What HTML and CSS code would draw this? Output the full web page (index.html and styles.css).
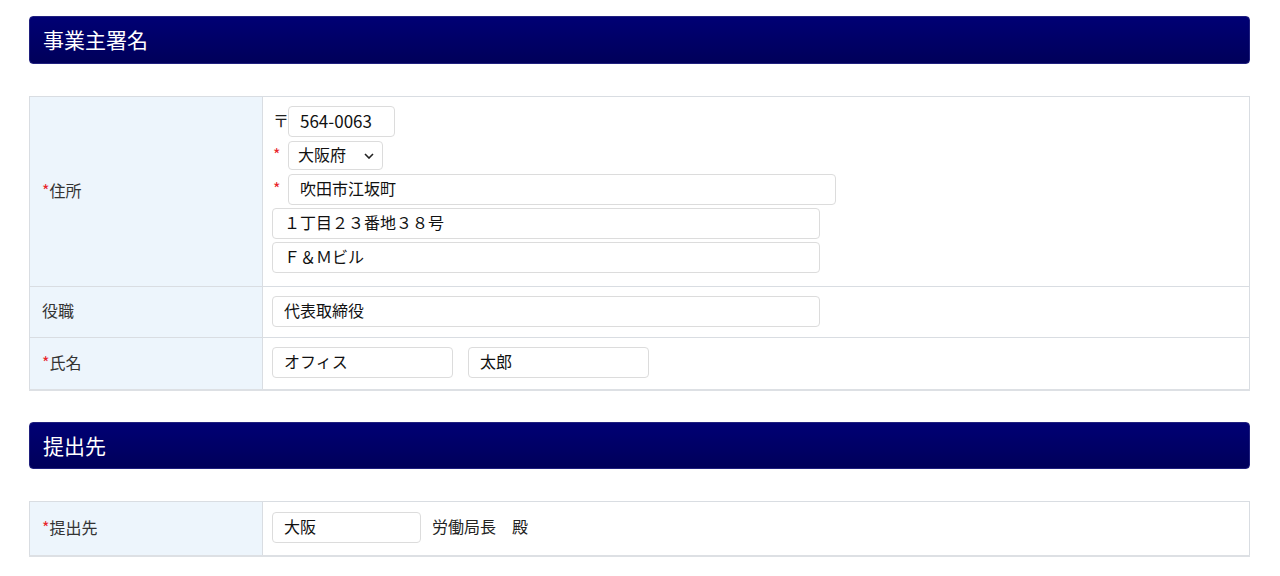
FILE: index.html
```html
<!DOCTYPE html>
<html lang="ja">
<head>
<meta charset="utf-8">
<title>事業主署名</title>
<link rel="stylesheet" href="styles.css">
</head>
<body>
<div class="page">
  <h2 class="section-title">事業主署名</h2>
  <table class="form-table">
    <tr class="row-address">
      <th><span class="req">*</span>住所</th>
      <td>
        <div class="line"><span class="prefix">〒</span><input class="field w-zip zip" type="text" value="564-0063"></div>
        <div class="line"><span class="prefix req">*</span><span class="select-wrap"><select class="field w-pref"><option>大阪府</option></select><svg class="chev" width="10" height="6" viewBox="0 0 10 6"><path d="M1 1 L5 5 L9 1" fill="none" stroke="#222" stroke-width="1.6"/></svg></span></div>
        <div class="line"><span class="prefix req">*</span><input class="field w-long" type="text" value="吹田市江坂町"></div>
        <div class="line"><input class="field w-long" type="text" value="１丁目２３番地３８号"></div>
        <div class="line"><input class="field w-long" type="text" value="Ｆ＆Ｍビル"></div>
      </td>
    </tr>
    <tr class="row-single">
      <th>役職</th>
      <td><input class="field w-long" type="text" value="代表取締役"></td>
    </tr>
    <tr class="row-single row-last">
      <th><span class="req">*</span>氏名</th>
      <td><div class="names"><input class="field w-name" type="text" value="オフィス"><input class="field w-name" type="text" value="太郎"></div></td>
    </tr>
  </table>

  <h2 class="section-title section-title-2">提出先</h2>
  <table class="form-table">
    <tr class="row-single row-office">
      <th><span class="req">*</span>提出先</th>
      <td><div class="office"><input class="field w-office" type="text" value="大阪"><span class="suffix">労働局長　殿</span></div></td>
    </tr>
  </table>
</div>
</body>
</html>
```

FILE: styles.css
```css
* { box-sizing: border-box; }
html, body { margin: 0; padding: 0; background: #fff; }
body {
  font-family: "Noto Sans CJK JP", "Noto Sans", sans-serif;
  color: #333;
}
.page {
  padding: 16px 30px 0 29px;
}
.section-title {
  margin: 0 0 32px 0;
  height: 48px;
  line-height: 44px;
  padding: 0 13px;
  font-size: 21px;
  font-weight: normal;
  color: #fff;
  background: linear-gradient(#000074, #00005a);
  border: 1px solid #20207e;
  border-radius: 4px;
}
.section-title-2 { height: 47px; }
.form-table {
  width: 100%;
  border-collapse: collapse;
  margin-bottom: 31px;
  border: 1px solid #d9dde2;
  border-bottom: 2px solid #dde0e4;
}
.form-table th,
.form-table td {
  border: 1px solid #d9dde2;
  vertical-align: middle;
}
.form-table th {
  width: 233px;
  background: #edf5fc;
  text-align: left;
  font-weight: normal;
  font-size: 16px;
  padding: 0 12px 4px;
  color: #333;
}
.form-table td {
  padding: 9px 10px 10px 9px;
  background: #fff;
}
.line {
  display: flex;
  align-items: center;
  height: 31px;
  margin-bottom: 3px;
}
.prefix {
  display: inline-block;
  width: 16px;
  font-size: 16px;
  color: #222;
  padding-left: 1px;
  padding-bottom: 3px;
}
.req { color: #e8242a; }
.field {
  height: 31px;
  border: 1px solid #dcdcdc;
  border-radius: 4px;
  font-family: "Noto Sans CJK JP", "Noto Sans", sans-serif;
  font-size: 16px;
  color: #111;
  padding: 0 11px 3px;
  background: #fff;
  outline: none;
}
.zip { font-size: 17px; }
.w-zip { width: 107px; }
.w-long { width: 548px; }
.w-name { width: 181px; }
.w-office { width: 149px; }
.select-wrap {
  position: relative;
  display: inline-block;
}
.w-pref {
  width: 95px;
  height: 29px;
  -webkit-appearance: none;
  appearance: none;
  padding: 0 9px 3px;
}
.chev {
  position: absolute;
  right: 9px;
  top: 12px;
  pointer-events: none;
}
.names {
  display: flex;
  gap: 15px;
}
.row-last td { padding-bottom: 11px; }
.row-office td { padding-top: 10px; padding-bottom: 12px; }
.office {
  display: flex;
  align-items: center;
  gap: 11px;
}
.suffix {
  font-size: 16px;
  color: #222;
  padding-bottom: 3px;
}
```
